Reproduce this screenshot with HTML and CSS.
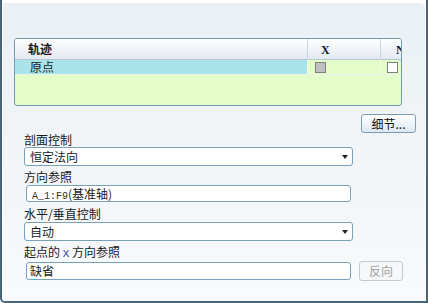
FILE: index.html
```html
<!DOCTYPE html>
<html lang="zh-CN">
<head>
  <meta charset="UTF-8" />
  <title>扫描轨迹</title>
  <link rel="stylesheet" href="styles.css">
</head>
<body>
<div class="frame">
  <div class="panel">
    <div class="table">
      <div class="thead">
        <div class="cell col-name">轨迹</div>
        <div class="cell col-x"><span class="head-latin">X</span></div>
        <div class="cell col-n"><span class="head-latin">N</span></div>
      </div>
      <div class="trow">
        <div class="cell col-name selected">原点</div>
        <div class="cell col-x"><span class="check gray"></span></div>
        <div class="cell col-n"><span class="check"></span></div>
      </div>
      <div class="filler"></div>
    </div>

    <div class="button-row">
      <button class="btn">细节...</button>
    </div>

    <div class="form">
      <div class="field-label first">剖面控制</div>
      <div class="select">恒定法向<span class="arrow"></span></div>

      <div class="field-label second">方向参照</div>
      <div class="text-input"><span class="mono">A_1:F9</span>(基准轴)</div>

      <div class="field-label third">水平/垂直控制</div>
      <div class="select">自动<span class="arrow"></span></div>

      <div class="field-label fourth">起点的 <span class="mono blue">X</span> 方向参照</div>
      <div class="input-row">
        <div class="text-input short">缺省</div>
        <button class="btn disabled" disabled>反向</button>
      </div>
    </div>
  </div>
</div>
</body>
</html>
```

FILE: styles.css
```css
* {
  box-sizing: border-box;
}
body {
  margin: 0;
  background: #fff;
  font-family: "Noto Sans CJK SC", "Noto Sans", sans-serif;
  font-size: 12px;
  color: #1a1a1a;
}
.frame {
  width: 428px;
  height: 303px;
  padding: 3px 1px 0 1px;
  border-left: 2px solid #45657a;
  border-right: 2px solid #45657a;
  border-bottom: 2px solid #45657a;
  border-bottom-left-radius: 5px;
  overflow: hidden;
}
.panel {
  height: 100%;
  padding: 35px 0 0 11px;
  background: linear-gradient(#eaf0f4, #f8fafb);
  border-top-right-radius: 5px;
}

/* table */
.table {
  width: 388px;
  height: 68px;
  border: 1px solid #6f9cb4;
  border-radius: 3px;
  background: #e4fcc8;
  overflow: hidden;
}
.thead,
.trow {
  display: grid;
  grid-template-columns: 293px 73px 20px;
}
.thead {
  height: 21px;
  background: linear-gradient(#ffffff, #e2e9f0);
  border-bottom: 1px solid #b6c7d4;
  font-weight: bold;
}
.thead .cell {
  line-height: 20px;
  border-right: 1px solid #c9d6e0;
}
.trow {
  height: 15px;
  border-bottom: 1px solid #e9f3ee;
}
.trow .cell {
  line-height: 14px;
  border-right: 1px solid #f2faea;
}
.cell {
  white-space: nowrap;
}
.col-n {
  overflow: hidden;
}
.thead .col-name {
  padding-left: 13px;
}
.trow .col-name {
  padding-left: 15px;
}
.thead .col-x {
  padding-left: 13px;
}
.thead .col-n {
  padding-left: 15px;
  border-right: none;
}
.trow .col-x {
  padding: 2px 0 0 7px;
}
.trow .col-n {
  padding: 2px 0 0 6px;
  border-right: none;
}
.selected {
  background: #a9e4eb;
}
.head-latin {
  font-family: "Liberation Serif", serif;
  font-size: 12px;
  font-weight: bold;
  color: #0d1a40;
}
.check {
  display: block;
  width: 11px;
  height: 11px;
  border: 1px solid #808080;
  background: #fff;
}
.check.gray {
  background: #c0c0c0;
}
.filler {
  height: 31px;
}

/* buttons */
.button-row {
  display: flex;
  justify-content: flex-end;
  margin-top: 8px;
  padding-right: 9px;
}
.btn {
  height: 19px;
  width: 55px;
  padding: 0;
  border: 1px solid #7c9db4;
  border-radius: 3px;
  background: linear-gradient(#ffffff, #dde9f2);
  font-family: inherit;
  font-size: 12px;
  line-height: 16px;
  color: #111;
}
.btn.disabled {
  width: 44px;
  height: 20px;
  border-color: #c4cacf;
  background: #f5f7f9;
  color: #a3a3a3;
}

/* form */
.form {
  padding-left: 10px;
}
.field-label {
  white-space: nowrap;
}
.field-label.first {
  height: 14px;
  line-height: 14px;
}
.field-label.second {
  padding-top: 2px;
  line-height: 17px;
}
.field-label.third {
  padding-top: 4px;
  line-height: 16px;
}
.field-label.fourth {
  padding-top: 3px;
  line-height: 15px;
}
.select {
  display: flex;
  justify-content: space-between;
  align-items: center;
  width: 329px;
  height: 19px;
  padding: 0 4px 0 5px;
  border: 1px solid #7aa1b7;
  border-radius: 3px;
  background: #fff;
  line-height: 17px;
}
.arrow {
  width: 0;
  height: 0;
  border-left: 3px solid transparent;
  border-right: 3px solid transparent;
  border-top: 4px solid #222;
  margin-top: 1px;
}
.text-input {
  width: 325px;
  height: 17px;
  margin-left: 2px;
  padding-left: 5px;
  border: 1px solid #7aa1b7;
  border-radius: 3px;
  background: #fff;
  line-height: 15px;
  white-space: nowrap;
}
.text-input.short {
  height: 18px;
  margin-left: 0;
  padding-left: 3px;
  line-height: 16px;
}
.mono {
  font-family: "Liberation Mono", monospace;
  font-size: 10px;
  color: #3a3020;
}
.mono.blue {
  font-size: 11px;
  color: #2b3f8a;
}
.input-row {
  display: flex;
  align-items: center;
  gap: 8px;
  height: 18px;
  margin-left: 2px;
}
```
